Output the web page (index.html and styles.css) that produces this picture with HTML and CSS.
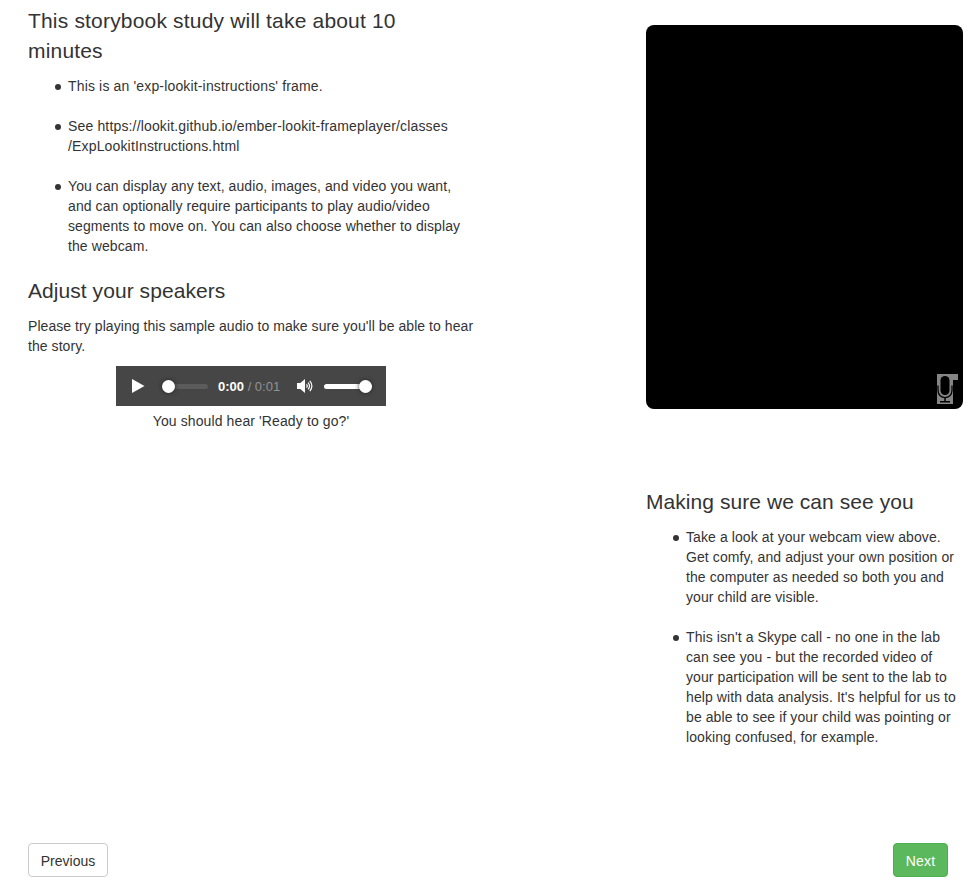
FILE: index.html
```html
<!DOCTYPE html>
<html lang="en">
<head>
<meta charset="utf-8">
<title>Study instructions</title>
<link rel="stylesheet" href="styles.css">
</head>
<body>
<main class="frame">
  <div class="columns">
    <section class="instructions">
      <h3 class="intro-title">This storybook study will take about 10<br>minutes</h3>
      <ul>
        <li class="loose">This is an 'exp-lookit-instructions' frame.</li>
        <li class="loose">See https://lookit.github.io/ember-lookit-frameplayer/classes<br>/ExpLookitInstructions.html</li>
        <li>You can display any text, audio, images, and video you want,<br>and can optionally require participants to play audio/video<br>segments to move on. You can also choose whether to display<br>the webcam.</li>
      </ul>
      <h3 class="speakers-title">Adjust your speakers</h3>
      <p>Please try playing this sample audio to make sure you'll be able to hear<br>the story.</p>
      <div class="player">
        <svg class="play" width="13" height="14" viewBox="0 0 13 14"><path d="M0 0 12.5 7 0 14Z" fill="#fff"/></svg>
        <div class="track seek"><span class="knob"></span></div>
        <div class="time"><b>0:00</b> / 0:01</div>
        <svg class="speaker" width="17" height="14" viewBox="0 0 17 14"><path d="M0 4h3.3L8 0v14L3.3 10H0Z" fill="#fff"/><g fill="none" stroke="#fff" stroke-width="1.2"><path d="M9.5 5.3q1.5 1.7 0 3.4M11 3.6q3.1 3.4 0 6.8M12.8 1.8q4.2 5.2 0 10.4"/></g></svg>
        <div class="track volume"><span class="knob"></span></div>
      </div>
      <p class="caption">You should hear 'Ready to go?'</p>
    </section>
    <section class="camera">
      <div class="webcam">
        <svg width="21" height="30" viewBox="0 0 21 30"><path d="M0 0H21V6H16V30H0Z" fill="#858585"/><rect x="3.5" y="2" width="9" height="19" rx="4.5" fill="#000"/><path d="M1 11.5V16.5C1 26 15 26 15 16.5V11.5" fill="none" stroke="#000" stroke-width="1.3"/><path d="M8 23.5v4M3 27.7h10" stroke="#000" stroke-width="1.5"/></svg>
      </div>
      <h3 class="camera-title">Making sure we can see you</h3>
      <ul>
        <li>Take a look at your webcam view above.<br>Get comfy, and adjust your own position or<br>the computer as needed so both you and<br>your child are visible.</li>
        <li>This isn't a Skype call - no one in the lab<br>can see you - but the recorded video of<br>your participation will be sent to the lab to<br>help with data analysis. It's helpful for us to<br>be able to see if your child was pointing or<br>looking confused, for example.</li>
      </ul>
    </section>
  </div>
  <nav class="actions">
    <button class="btn">Previous</button>
    <button class="btn primary">Next</button>
  </nav>
</main>
</body>
</html>
```
FILE: styles.css
```css
* { box-sizing: border-box; }
body {
  margin: 0;
  background: #fff;
  color: #333;
  font: 14px/20px "Liberation Sans", Arial, sans-serif;
  white-space: nowrap;
}
.frame { width: 967px; height: 880px; overflow: hidden; }
.columns { display: flex; height: 843px; padding-left: 28px; }
.instructions { width: 618px; padding-top: 6px; }
.camera { width: 317px; padding-top: 25px; }
h3 {
  margin: 0 0 10px;
  font-size: 21px;
  line-height: 30px;
  font-weight: 400;
  letter-spacing: .06px;
}
.intro-title { letter-spacing: .18px; }
ul { margin: 0; padding-left: 40px; list-style: none; }
li { position: relative; letter-spacing: .09px; }
li::before {
  content: "";
  position: absolute;
  left: -13px;
  top: 8px;
  width: 6px;
  height: 6px;
  border-radius: 50%;
  background: #333;
}
li + li { margin-top: 20px; }
.loose { letter-spacing: .155px; }
.speakers-title { margin: 20px 0 10px; }
p { margin: 0; letter-spacing: .06px; }
.player {
  display: flex;
  align-items: center;
  width: 270px;
  height: 40px;
  margin: 10px 0 5px 88px;
  padding-left: 16px;
  background: #464646;
}
.track { position: relative; height: 5px; border-radius: 3px; }
.seek { width: 45px; margin-left: 18px; background: #5b5b5b; }
.volume { width: 48px; margin-left: 10px; background: #fff; }
.knob {
  position: absolute;
  top: -4px;
  left: -1px;
  width: 13px;
  height: 13px;
  border-radius: 50%;
  background: #fff;
  box-shadow: 0 0 4px #222;
}
.volume .knob { left: 35px; }
.time { width: 62px; margin-left: 10px; padding-top: 1px; color: #929292; font-size: 13px; }
.time b { color: #fff; }
.speaker { margin-left: 17px; }
.caption { width: 270px; margin-left: 88px; text-align: center; letter-spacing: .11px; }
.webcam {
  display: flex;
  align-items: flex-end;
  justify-content: flex-end;
  width: 317px;
  height: 384px;
  padding: 0 5px 5px 0;
  border-radius: 8px;
  background: #000;
}
.camera-title { margin: 78px 0 10px; }
.actions { display: flex; justify-content: space-between; width: 920px; margin-left: 28px; }
.btn {
  width: 80px;
  height: 34px;
  padding: 2px 0 0;
  border: 1px solid #ccc;
  border-radius: 4px;
  background: #fff;
  color: #333;
  font: inherit;
}
.primary { width: 55px; border-color: #4cae4c; background: #5cb85c; color: #fff; letter-spacing: .2px; }
```
